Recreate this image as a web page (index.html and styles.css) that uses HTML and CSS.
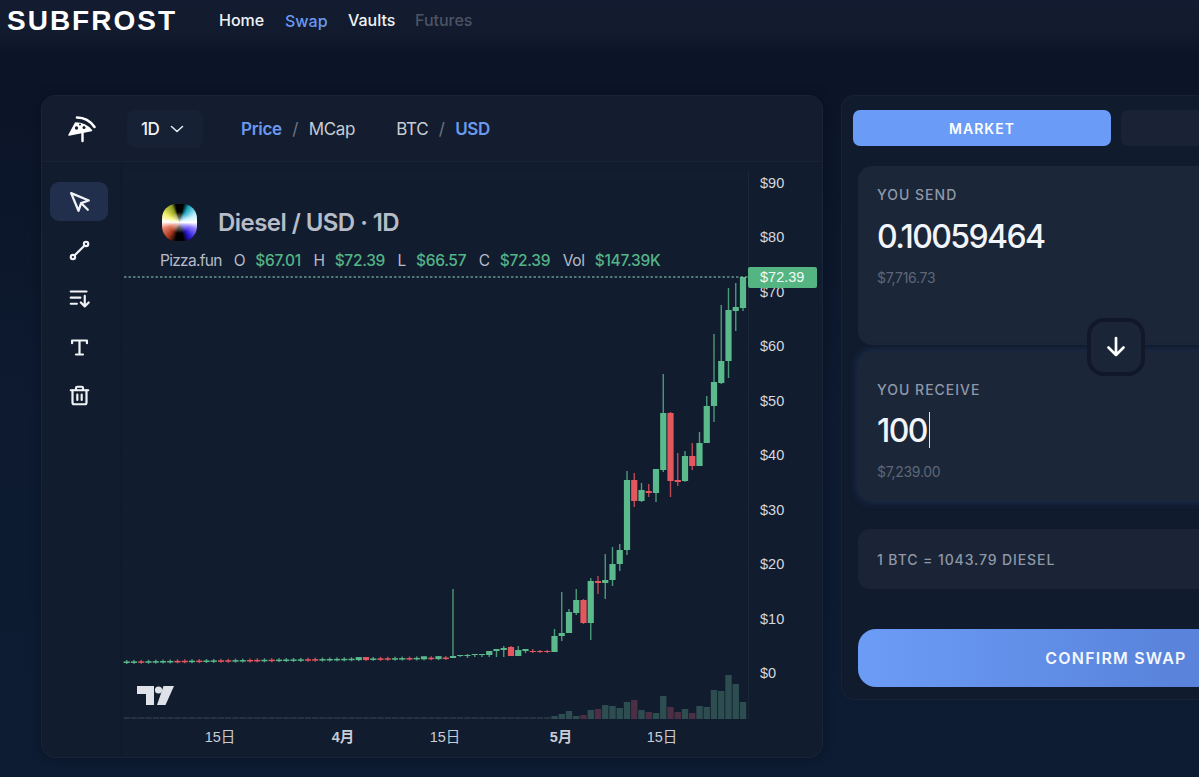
FILE: index.html
```html
<!DOCTYPE html>
<html lang="en">
<head>
    <meta charset="UTF-8">
    <meta name="viewport" content="width=device-width, initial-scale=1.0">
    <title>Subfrost - Swap</title>
    <link rel="stylesheet" href="styles.css">
</head>
<body>
    <header class="topbar">
        <div class="brand">SUBFROST</div>
        <nav class="nav">
            <a class="nav-home">Home</a>
            <a class="nav-swap">Swap</a>
            <a class="nav-vaults">Vaults</a>
            <a class="nav-futures">Futures</a>
        </nav>
    </header>

    <main class="page">
        <section class="chart-panel">
            <div class="chart-toolbar">
                <svg class="pizza" viewBox="66 114 31 30">
                    <path d="M75.500 123C81.500 123 87.500 125.500 91.500 130.500L69 135Z" fill="#fff" stroke="#fff" stroke-width="1.500" stroke-linejoin="round"/>
                    <path d="M77 117.500C83 117.500 90 120.500 94.500 127" fill="none" stroke="#fff" stroke-width="2.600" stroke-linecap="round"/>
                    <circle cx="76.500" cy="128" r="1.700" fill="#131c2e"/>
                    <circle cx="84" cy="127.500" r="1.500" fill="#131c2e"/>
                    <circle cx="80" cy="124.500" r="1" fill="#131c2e"/>
                    <path d="M82.500 132V141" fill="none" stroke="#fff" stroke-width="2.400" stroke-linecap="round"/>
                </svg>
                <button class="interval">1D
                    <svg class="chevron" viewBox="0 0 14 8"><path d="M1.500 1.500L7 6.500L12.500 1.500" fill="none" stroke="#e6e9ee" stroke-width="1.600" stroke-linecap="round" stroke-linejoin="round"/></svg>
                </button>
                <div class="switch switch-metric"><span class="on">Price</span><i>/</i><span>MCap</span></div>
                <div class="switch switch-unit"><span>BTC</span><i>/</i><span class="on">USD</span></div>
            </div>

            <div class="chart-body">
                <div class="tools">
                    <button class="tool active">
                        <svg class="tool-cursor" viewBox="0 0 24 24"><path d="M3 3l7.070 16.970 2.510-7.390 7.390-2.510L3 3z"/><path d="M13 13l6 6"/></svg>
                    </button>
                    <button class="tool">
                        <svg viewBox="0 0 24 24"><circle cx="4.500" cy="19.500" r="2.500"/><circle cx="19.500" cy="4.500" r="2.500"/><path d="M6.500 17.500L17.500 6.500"/></svg>
                    </button>
                    <button class="tool">
                        <svg viewBox="0 0 24 24"><path d="M2 4h18M2 11h11M2 18h7"/><path d="M18 9v12M13.500 16.500L18 21l4.500-4.500"/></svg>
                    </button>
                    <button class="tool">
                        <svg viewBox="0 0 24 24"><path d="M3.500 7V4h17v3M12 4v16M8 20h8"/></svg>
                    </button>
                    <button class="tool">
                        <svg viewBox="0 0 24 24"><path d="M2 6h20M8 6V3.500A1.500 1.500 0 0 1 9.500 2h5A1.500 1.500 0 0 1 16 3.500V6"/><path d="M4 6v14a2 2 0 0 0 2 2h12a2 2 0 0 0 2-2V6"/><path d="M9.500 11v6M14.500 11v6"/></svg>
                    </button>
                </div>

                <div class="chart">
                    <svg id="chartSvg" class="chart-svg" viewBox="123 172 694 580"></svg>
                    <div class="legend">
                        <div class="legend-title">
                            <span class="coin"></span>
                            <span>Diesel / USD · 1D</span>
                        </div>
                        <div class="legend-ohlc">
                            <span>Pizza.fun</span>
                            <span>O</span><b>$67.01</b>
                            <span>H</span><b>$72.39</b>
                            <span>L</span><b>$66.57</b>
                            <span>C</span><b>$72.39</b>
                            <span>Vol</span><b>$147.39K</b>
                        </div>
                    </div>
                </div>
            </div>
        </section>

        <section class="swap-panel">
            <div class="tabs">
                <button class="tab active">MARKET</button>
                <button class="tab"></button>
            </div>

            <div class="boxes">
                <div class="box box-send">
                    <div class="box-label">YOU SEND</div>
                    <div class="box-amount">0.10059464</div>
                    <div class="box-usd">$7,716.73</div>
                </div>
                <div class="box box-receive">
                    <div class="box-label">YOU RECEIVE</div>
                    <div class="box-amount">100<span class="caret"></span></div>
                    <div class="box-usd">$7,239.00</div>
                </div>
                <button class="flip">
                    <svg viewBox="0 0 24 24"><path d="M12 3v17M4.500 12.500l7.500 7.500 7.500-7.500"/></svg>
                </button>
            </div>

            <div class="rate">1 BTC = 1043.79 DIESEL</div>
            <button class="confirm">CONFIRM SWAP</button>
        </section>
    </main>

    <script src="chart.js"></script>
</body>
</html>
```

FILE: styles.css
```css
* {
    box-sizing: border-box;
}
html, body {
    height: 100%;
}
body {
    margin: 0;
    width: 1199px;
    height: 777px;
    overflow: hidden;
    font-family: Inter, "Noto Sans", sans-serif;
    color: #e8ebf0;
    background: linear-gradient(180deg, #0c1427 50px, #0d1a30 420px, #0d1c33 777px);
}
button {
    font-family: inherit;
    border: 0;
    padding: 0;
    color: inherit;
}

/* top bar */
.topbar {
    height: 53px;
    display: flex;
    align-items: flex-start;
    padding: 6px 0 0 7px;
    background: linear-gradient(180deg, #131c30 0, #121b2e 34px, #0c1427 53px);
}
.brand {
    width: 212px;
    font-family: "Liberation Sans", Arial, sans-serif;
    font-size: 28px;
    line-height: 30px;
    font-weight: 700;
    letter-spacing: 2px;
    color: #fff;
}
.nav {
    display: flex;
    font-size: 16px;
    line-height: 28px;
    font-weight: 500;
}
.nav a {
    display: block;
}
.nav-home {
    width: 66px;
    color: #f0f2f6;
}
.nav-swap {
    width: 63px;
    color: #6b99ee;
    padding-top: 1px;
}
.nav-vaults {
    width: 67px;
    color: #f0f2f6;
}
.nav-futures {
    color: #4c5464;
}

/* layout */
.page {
    display: flex;
    gap: 18px;
    padding: 42px 0 0 41px;
}

/* chart panel */
.chart-panel {
    width: 782px;
    height: 663px;
    flex-shrink: 0;
    display: flex;
    flex-direction: column;
    background: #121c2f;
    border: 1px solid #1a2438;
    border-radius: 14px;
    box-shadow: 0 0 10px rgba(8, 14, 28, 0.6);
}
.chart-toolbar {
    height: 66px;
    flex-shrink: 0;
    display: flex;
    align-items: center;
    background: #131d2f;
    border-bottom: 1px solid #172237;
    border-radius: 14px 14px 0 0;
    font-size: 17px;
    letter-spacing: -0.3px;
}
.pizza {
    width: 31px;
    height: 30px;
    margin-left: 24px;
    margin-top: 1px;
}
.interval {
    width: 76px;
    height: 38px;
    margin-left: 30px;
    padding-left: 14px;
    display: flex;
    align-items: center;
    gap: 11px;
    background: #162136;
    border-radius: 8px;
    font-size: 17px;
    font-weight: 500;
    letter-spacing: -0.5px;
    color: #f0f2f6;
}
.chevron {
    width: 14px;
    height: 8px;
}
.switch {
    display: flex;
    align-items: center;
    color: #c8ccd4;
}
.switch i {
    margin: 0 10.500px;
    color: #6d7584;
    font-style: normal;
}
.switch .on {
    color: #6b99ee;
    font-weight: 600;
}
.switch-metric {
    margin-left: 38px;
}
.switch-unit {
    margin-left: 41px;
}

.chart-body {
    flex: 1;
    display: flex;
    min-height: 0;
}
.tools {
    width: 81px;
    flex-shrink: 0;
    padding: 20px 0 0 8px;
    display: flex;
    flex-direction: column;
    gap: 9.500px;
    border-right: 3px solid #111a2c;
}
.tool {
    width: 58px;
    height: 39px;
    display: flex;
    align-items: center;
    justify-content: center;
    background: transparent;
    border-radius: 9px;
}
.tool.active {
    background: #222f4c;
}
.tool svg {
    width: 21px;
    height: 21px;
    fill: none;
    stroke: #f0f2f6;
    stroke-width: 2.5;
    stroke-linecap: round;
    stroke-linejoin: round;
}
.tool svg.tool-cursor {
    width: 25px;
    height: 25px;
    margin: 2px 0 0 2px;
    stroke-width: 2.2;
}
.chart {
    position: relative;
    width: 694px;
    height: 580px;
    margin-top: 9px;
}
.chart-svg {
    display: block;
    width: 694px;
    height: 580px;
    font-family: "Liberation Sans", Arial, "Noto Sans CJK JP", sans-serif;
}
.axis-text {
    font-size: 14.500px;
    fill: #d4d8df;
}
.date-text {
    font-size: 14.500px;
    fill: #c9cdd5;
}
.date-text.major {
    font-weight: 700;
}
.tag-text {
    font-size: 14.500px;
    fill: #f2fbf6;
}

/* legend over the chart */
.legend {
    position: absolute;
    left: 37px;
    top: 32px;
}
.legend-title {
    display: flex;
    align-items: center;
    gap: 21px;
    height: 38px;
    margin-left: 2px;
    font-size: 24px;
    font-weight: 600;
    letter-spacing: -0.55px;
    color: #b6bcc8;
}
.coin {
    width: 35px;
    height: 37px;
    border-radius: 40%;
    background:
        radial-gradient(circle, rgba(255, 255, 255, 0.95) 0, rgba(255, 255, 255, 0.45) 18%, rgba(255, 255, 255, 0) 42%),
        conic-gradient(#000 0deg, #000 12deg, #19a7c0 30deg, #c8f2ff 65deg, #fff 90deg, #8f7cff 112deg, #2a18d0 145deg, #000 168deg, #000 192deg, #a8381f 218deg, #e8806a 250deg, #fff 272deg, #f4f06a 300deg, #8a9a20 335deg, #000 348deg);
}
.legend-ohlc {
    display: flex;
    margin-top: 10px;
    font-size: 15.500px;
    line-height: 20px;
    letter-spacing: -0.3px;
    color: #b6bcc8;
}
.legend-ohlc b {
    font-weight: 500;
    color: #53b486;
    margin: 0 12.500px 0 10px;
}
.legend-ohlc span:first-child {
    margin-right: 12px;
    letter-spacing: -0.7px;
}

/* swap panel, it runs on past the edge of the window */
.swap-panel {
    flex: 1;
    min-width: 0;
    height: 605px;
    overflow: hidden;
    padding: 14px 0 0 11px;
    background: #111b2e;
    border: 1px solid #182237;
    border-right: 0;
    border-radius: 14px 0 0 14px;
}
.tabs {
    display: flex;
    gap: 10px;
    width: 526px;
}
.tab {
    width: 258px;
    height: 36px;
    flex-shrink: 0;
    border-radius: 7px;
    background: #192335;
    font-size: 14px;
    font-weight: 600;
    letter-spacing: 1px;
    color: #fff;
}
.tab.active {
    background: #6a9bf6;
}
.boxes {
    position: relative;
    width: 516px;
    margin: 20px 0 0 5px;
    display: flex;
    flex-direction: column;
    gap: 6px;
}
.box {
    padding: 20px 19px 0;
    background: #1b2638;
    border-radius: 14px;
}
.box-send {
    height: 179px;
}
.box-receive {
    height: 150px;
    padding-top: 30px;
    box-shadow: 0 0 8px rgba(44, 76, 130, 0.5);
}
.box-label {
    font-size: 14px;
    line-height: 18px;
    font-weight: 500;
    letter-spacing: 1px;
    color: #8f98a8;
}
.box-amount {
    display: flex;
    align-items: center;
    height: 40px;
    margin-top: 12px;
    font-size: 32px;
    font-weight: 500;
    letter-spacing: -1.600px;
    color: #f1f4f9;
}
.box-receive .box-amount {
    margin-top: 11px;
}
.caret {
    width: 1px;
    height: 36px;
    margin-left: 2px;
    background: #dfe4ec;
}
.box-usd {
    margin-top: 12px;
    font-size: 14px;
    line-height: 20px;
    letter-spacing: -0.3px;
    color: #5d6677;
}
.flip {
    position: absolute;
    left: 229px;
    top: 152px;
    width: 58px;
    height: 58px;
    display: flex;
    align-items: center;
    justify-content: center;
    background: #1a2537;
    border: 4px solid #101829;
    border-radius: 17px;
}
.flip svg {
    width: 24px;
    height: 24px;
    fill: none;
    stroke: #fff;
    stroke-width: 2.700;
    stroke-linecap: round;
    stroke-linejoin: round;
}
.rate {
    width: 516px;
    height: 60px;
    margin: 28px 0 0 5px;
    padding-left: 19px;
    display: flex;
    align-items: center;
    background: #1a2436;
    border-radius: 12px;
    font-size: 14px;
    font-weight: 500;
    letter-spacing: 0.9px;
    color: #8f98a8;
}
.confirm {
    display: block;
    width: 516px;
    height: 58px;
    margin: 40px 0 0 5px;
    border-radius: 18px;
    background: linear-gradient(90deg, #6b9cf6 0, #5a84dc 60%, #5a84dc 100%);
    font-size: 16px;
    font-weight: 600;
    letter-spacing: 1.200px;
    color: #f4f7fd;
}
```

FILE: chart.js
```js
// chart is drawn in page pixels, the viewBox of the svg starts at 123,172
const GREEN = '#5aba8b';
const RED = '#e5575f';
const svg = document.getElementById('chartSvg');
const xOf = n => 743 - n * 7.25; // n = candles counted from the right

// [color, bodyTop, bodyBottom, wickTop, wickBottom], newest first
const candles = [
    ['g', 278, 309, 278, 312], ['g', 308, 312, 284, 332], ['g', 311, 362, 289, 379],
    ['g', 362, 384, 306, 385], ['g', 383, 407, 335, 423], ['g', 407, 444, 397, 444],
    ['g', 444, 467, 433, 467], ['r', 457, 467, 444, 471], ['g', 457, 482, 452, 483],
    ['r', 481, 483, 454, 487], ['r', 414, 482, 413, 498], ['g', 414, 471, 375, 473],
    ['g', 470, 494, 470, 503], ['r', 492, 494, 485, 498], ['g', 491, 502, 484, 503],
    ['r', 481, 502, 474, 508], ['g', 481, 551, 472, 556], ['g', 551, 565, 545, 572],
    ['g', 565, 581, 548, 587], ['g', 581, 584, 555, 600], ['r', 582, 584, 577, 595],
    ['g', 582, 624, 579, 641], ['r', 601, 624, 600, 625], ['g', 601, 614, 590, 616],
    ['g', 613, 634, 610, 634], ['g', 634, 637, 593, 642], ['g', 637, 653, 630, 653],
    ['r', 652, 653, 651, 654], ['r', 652, 653, 651, 654], ['r', 652, 653, 650, 654],
    ['g', 650, 652, 650, 654], ['g', 651, 657, 647, 657], ['r', 648, 657, 647, 657],
    ['g', 649, 651, 647, 658], ['g', 650, 652, 650, 658], ['g', 652, 656, 652, 658],
    ['g', 655, 656, 655, 658], ['g', 655, 656, 655, 658], ['g', 656, 657, 655, 659],
    ['g', 656, 657, 656, 658], ['g', 657, 659, 590, 659]
];

// the long flat start of the chart, oldest first
const flat = 'ggrggggrrgrggrrggrrgrggggrrggggggrgrrggrggrgr';
flat.split('').forEach((c, i) => {
    const y = 663 - i * 0.09;
    const wide = i === 32 || i === 33 || i === 41 || i === 43;
    candles[85 - i] = [c, y - (wide ? 2 : 0.5), y + 1, y - 2, y + 2];
});

// bar tops of the volume, newest first
const volume = [703, 685, 676, 692, 691, 708, 707, 714, 710, 713, 708, 697, 714, 713, 711, 701, 703, 709, 707, 706, 710, 711, 716, 717, 712, 715, 717];

function add(name, attrs, text) {
    const el = document.createElementNS('http://www.w3.org/2000/svg', name);
    Object.keys(attrs).forEach(k => el.setAttribute(k, attrs[k]));
    if (text) el.textContent = text;
    svg.appendChild(el);
}

// frame and grid
add('rect', { x: 123, y: 172, width: 625, height: 9, fill: '#131d30' });
[347, 401, 455, 510, 565].forEach(y => {
    add('line', { x1: 124, x2: 748, y1: y, y2: y, stroke: '#141f32', 'stroke-width': 1 });
});
add('line', { x1: 748.5, x2: 748.5, y1: 172, y2: 720, stroke: '#1b2637', 'stroke-width': 1 });

// volume
candles.forEach((c, n) => {
    if (!c) return;
    const top = n < volume.length ? volume[n] : 718;
    add('rect', {
        x: xOf(n) - 3.2, y: top, width: 6.4, height: 720 - top,
        fill: n < volume.length ? (c[0] === 'g' ? '#2e4d50' : '#4c2f44') : '#263240'
    });
});

// candles
candles.forEach((c, n) => {
    if (!c) return;
    const x = xOf(n);
    const color = c[0] === 'g' ? GREEN : RED;
    add('rect', { x: x - 0.7, y: c[3], width: 1.4, height: c[4] - c[3], fill: color, opacity: 0.8 });
    add('rect', { x: x - 3.1, y: c[1], width: 6.2, height: c[2] - c[1], fill: color });
});

// price axis
for (let p = 0; p <= 90; p += 10) {
    add('text', { x: 760, y: 679 - p * 5.45, class: 'axis-text' }, '$' + p);
}

// last price line and tag
add('line', { x1: 124, x2: 748, y1: 278, y2: 278, stroke: '#8fd0b8', 'stroke-width': 1, 'stroke-dasharray': '2.500 2' });
add('rect', { x: 748, y: 268, width: 69, height: 21, rx: 2, fill: '#55b582' });
add('text', { x: 760, y: 283, class: 'tag-text' }, '$72.39');

// dates
[[220, '15日', 0], [343, '4月', 1], [445, '15日', 0], [561, '5月', 1], [662, '15日', 0]].forEach(d => {
    add('text', { x: d[0], y: 743, 'text-anchor': 'middle', class: d[2] ? 'date-text major' : 'date-text' }, d[1]);
});

// tradingview mark
add('path', { d: 'M137 687H154V706H146V695H137Z', fill: '#dfe2e8' });
add('circle', { cx: 158.5, cy: 691, r: 3.6, fill: '#dfe2e8' });
add('path', { d: 'M163.500 687H174L165.500 706H157Z', fill: '#dfe2e8' });
```
